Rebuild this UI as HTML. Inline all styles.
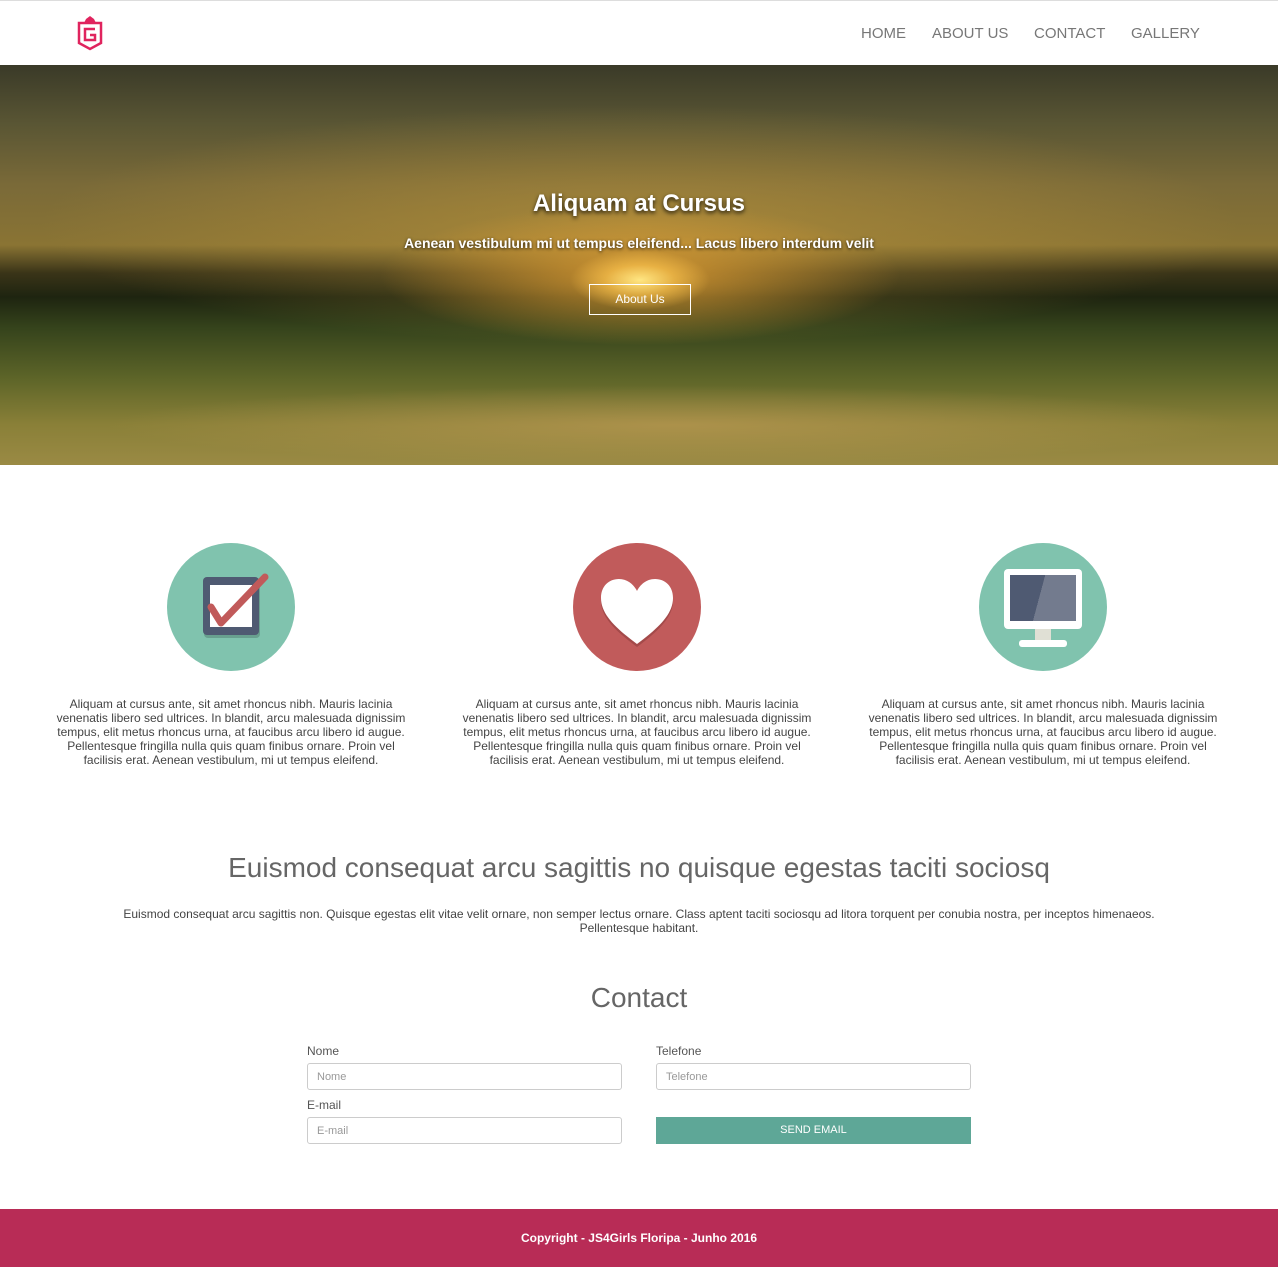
<!DOCTYPE html>
<html><head><meta charset="utf-8"><style>
*{box-sizing:border-box;margin:0;padding:0}
body{width:1278px;height:1267px;font-family:"Liberation Sans",Arial,sans-serif;background:#fff;color:#444;position:relative;overflow:hidden}
.nav{position:absolute;top:0;left:0;width:1278px;height:65px;border-top:1px solid #ddd;background:#fff}
.nav a{position:absolute;top:24px;font-size:15px;color:#777;text-decoration:none}
.hero{position:absolute;top:65px;left:0;width:1278px;height:400px;overflow:hidden;
background:
radial-gradient(ellipse 70px 30px at 640px 215px,rgba(255,230,130,1),rgba(255,200,80,.6) 50%,rgba(0,0,0,0) 100%),
radial-gradient(ellipse 260px 70px at 640px 210px,rgba(230,160,50,.8),rgba(0,0,0,0) 100%),
radial-gradient(ellipse 600px 120px at 640px 160px,rgba(190,150,60,.6),rgba(0,0,0,0) 100%),
linear-gradient(180deg,#3a3a28 0%,#5a5634 15%,#7a6a38 30%,#8a7434 45%,#3a3418 52%,#1e2410 58%,#36441c 66%,#5c6428 78%,#8a8038 90%,#9a8a44 100%);}
.path{position:absolute;left:100px;top:320px;width:1150px;height:80px;background:radial-gradient(ellipse at 50% 50%,rgba(200,160,90,.55),rgba(0,0,0,0) 70%)}
.hero h1{position:absolute;top:125px;width:100%;text-align:center;font-size:24px;color:#fff;text-shadow:0 2px 4px rgba(0,0,0,.8)}
.hero p{position:absolute;top:170px;width:100%;text-align:center;font-size:14px;font-weight:bold;color:#fff;text-shadow:0 1px 3px rgba(0,0,0,.8)}
.btn{position:absolute;top:219px;left:589px;width:102px;height:31px;border:1px solid #fff;color:#fff;font-size:12px;text-align:center;line-height:29px}
.circ{position:absolute;top:543px;width:128px;height:128px;border-radius:50%}
.txt{position:absolute;top:697px;width:360px;text-align:center;font-size:12px;line-height:14px;color:#444}
h2{position:absolute;top:852px;width:100%;text-align:center;font-weight:normal;font-size:28px;color:#666}
.p2{position:absolute;top:907px;left:110px;width:1058px;text-align:center;font-size:12px;line-height:14px}
h3{position:absolute;top:982px;width:100%;text-align:center;font-weight:normal;font-size:28px;color:#666}
label{position:absolute;font-size:12px;color:#555}
.in{position:absolute;width:315px;height:27px;border:1px solid #ccc;border-radius:3px;font-size:11px;color:#999;padding:7px 9px}
.send{position:absolute;left:656px;top:1117px;width:315px;height:27px;background:#5ea797;color:#fff;font-size:11px;text-align:center;line-height:27px}
.foot{position:absolute;top:1209px;left:0;width:1278px;height:58px;background:#b82c56;color:#fff;font-size:12px;font-weight:bold;text-align:center;line-height:58px}
</style></head><body>
<div class="nav">
<svg style="position:absolute;left:76px;top:14px" width="28" height="36" viewBox="0 0 28 36"><path d="M8 8 L10 4 L14 1 L18 4 L20 8 Z" fill="#e0245e"/><path d="M3 8 H25 V28 L14 34 L3 28 Z" fill="none" stroke="#e0245e" stroke-width="2.5"/><path d="M19 14 H9 V25 H19 V20 H14" fill="none" stroke="#e0245e" stroke-width="2.5"/></svg>
<a style="left:861px">HOME</a><a style="left:932px">ABOUT US</a><a style="left:1034px">CONTACT</a><a style="left:1131px">GALLERY</a>
</div>
<div class="hero"><div class="path"></div>
<h1>Aliquam at Cursus</h1>
<p>Aenean vestibulum mi ut tempus eleifend... Lacus libero interdum velit</p>
<div class="btn">About Us</div></div>

<div class="circ" style="left:167px;background:#80c3ae">
<div style="position:absolute;left:37px;top:37px;width:56px;height:58px;background:#68a08f;border-radius:4px"></div>
<div style="position:absolute;left:36px;top:34px;width:56px;height:58px;background:#4f5a72;border-radius:4px"></div>
<div style="position:absolute;left:43px;top:42px;width:42px;height:42px;background:#fff"></div>
<svg style="position:absolute;left:0;top:0" width="128" height="128"><path d="M44 64 L54 80 L98 34" fill="none" stroke="#c15a5a" stroke-width="7" stroke-linecap="round" stroke-linejoin="round"/></svg>
</div>
<div class="circ" style="left:573px;background:#c15b5b">
<svg style="position:absolute;left:0;top:0" width="128" height="128"><path d="M64 101 C44 86 28 72 28 55 C28 43 36 36 46 36 C55 36 61 42 64 48 C67 42 73 36 82 36 C92 36 100 43 100 55 C100 72 84 86 64 101 Z" fill="#a44a4a" transform="translate(0,3)"/><path d="M64 101 C44 86 28 72 28 55 C28 43 36 36 46 36 C55 36 61 42 64 48 C67 42 73 36 82 36 C92 36 100 43 100 55 C100 72 84 86 64 101 Z" fill="#fff"/></svg>
</div>
<div class="circ" style="left:979px;background:#80c3ae">
<div style="position:absolute;left:25px;top:26px;width:78px;height:60px;background:#fff;border-radius:4px"></div>
<div style="position:absolute;left:31px;top:32px;width:66px;height:46px;background:linear-gradient(105deg,#4f5a72 0 45%,#737b8e 45%)"></div>
<div style="position:absolute;left:56px;top:86px;width:16px;height:12px;background:#e0e0d5"></div>
<div style="position:absolute;left:40px;top:97px;width:48px;height:7px;background:#fff;border-radius:3px"></div>
</div>

<div class="txt" style="left:51px">Aliquam at cursus ante, sit amet rhoncus nibh. Mauris lacinia venenatis libero sed ultrices. In blandit, arcu malesuada dignissim tempus, elit metus rhoncus urna, at faucibus arcu libero id augue. Pellentesque fringilla nulla quis quam finibus ornare. Proin vel facilisis erat. Aenean vestibulum, mi ut tempus eleifend.</div>
<div class="txt" style="left:457px">Aliquam at cursus ante, sit amet rhoncus nibh. Mauris lacinia venenatis libero sed ultrices. In blandit, arcu malesuada dignissim tempus, elit metus rhoncus urna, at faucibus arcu libero id augue. Pellentesque fringilla nulla quis quam finibus ornare. Proin vel facilisis erat. Aenean vestibulum, mi ut tempus eleifend.</div>
<div class="txt" style="left:863px">Aliquam at cursus ante, sit amet rhoncus nibh. Mauris lacinia venenatis libero sed ultrices. In blandit, arcu malesuada dignissim tempus, elit metus rhoncus urna, at faucibus arcu libero id augue. Pellentesque fringilla nulla quis quam finibus ornare. Proin vel facilisis erat. Aenean vestibulum, mi ut tempus eleifend.</div>

<h2>Euismod consequat arcu sagittis no quisque egestas taciti sociosq</h2>
<div class="p2">Euismod consequat arcu sagittis non. Quisque egestas elit vitae velit ornare, non semper lectus ornare. Class aptent taciti sociosqu ad litora torquent per conubia nostra, per inceptos himenaeos. Pellentesque habitant.</div>
<h3>Contact</h3>
<label style="left:307px;top:1044px">Nome</label>
<label style="left:656px;top:1044px">Telefone</label>
<div class="in" style="left:307px;top:1063px">Nome</div>
<div class="in" style="left:656px;top:1063px">Telefone</div>
<label style="left:307px;top:1098px">E-mail</label>
<div class="in" style="left:307px;top:1117px">E-mail</div>
<div class="send">SEND EMAIL</div>
<div class="foot">Copyright - JS4Girls Floripa - Junho 2016</div>
</body></html>
